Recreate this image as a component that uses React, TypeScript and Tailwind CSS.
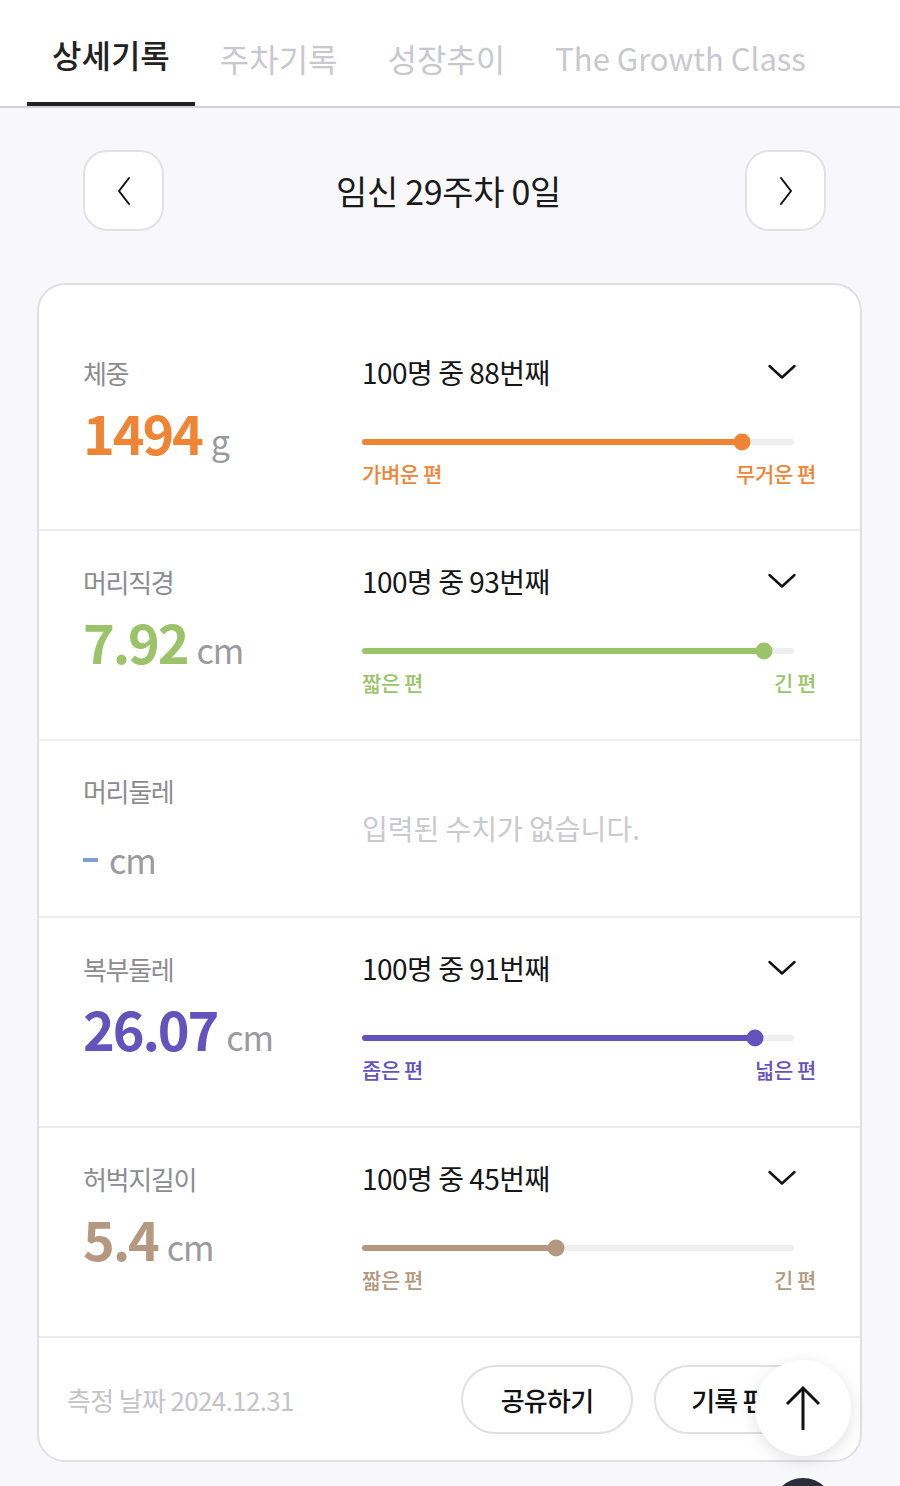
type Metric = {
    label: string;
    value?: string;
    unit: string;
    rank?: number;
    low?: string;
    high?: string;
    valueClass: string;
    fillClass: string;
    textClass: string;
};

const metrics: Metric[] = [
    { label: '체중', value: '1494', unit: 'g', rank: 88, low: '가벼운 편', high: '무거운 편', valueClass: 'text-[#ee8434]', fillClass: 'bg-[#ee8434]', textClass: 'text-[#ee8434]' },
    { label: '머리직경', value: '7.92', unit: 'cm', rank: 93, low: '짧은 편', high: '긴 편', valueClass: 'text-[#9bc46a]', fillClass: 'bg-[#9bc46a]', textClass: 'text-[#9bc46a]' },
    { label: '머리둘레', unit: 'cm', valueClass: '', fillClass: '', textClass: '' },
    { label: '복부둘레', value: '26.07', unit: 'cm', rank: 91, low: '좁은 편', high: '넓은 편', valueClass: 'text-[#6453bd]', fillClass: 'bg-[#6453bd]', textClass: 'text-[#6453bd]' },
    { label: '허벅지길이', value: '5.4', unit: 'cm', rank: 45, low: '짧은 편', high: '긴 편', valueClass: 'text-[#b49880]', fillClass: 'bg-[#b49880]', textClass: 'text-[#b49880]' },
];

const DownChevron = () => (
    <svg width="28" height="16" viewBox="0 0 28 16" fill="none">
        <polyline points="1.5,2 14,13.5 26.5,2" stroke="#111" strokeWidth="2.4" strokeLinecap="round" strokeLinejoin="round" />
    </svg>
);

const NavChevron = ({ dir }: { dir: 'left' | 'right' }) => (
    <svg width="14" height="30" viewBox="0 0 14 30" fill="none">
        <polyline
            points={dir === 'left' ? '12,2 2,15 12,28' : '2,2 12,15 2,28'}
            stroke="#111"
            strokeWidth="2"
            strokeLinecap="round"
            strokeLinejoin="round"
        />
    </svg>
);

const MetricRow = ({ m, first }: { m: Metric; first: boolean }) => {
    if (!m.value) {
        return (
            <div className="flex pl-[44px] pr-[44px] pt-[34px] pb-[35px] border-t-2 border-[#ececee]">
                <div className="w-[279px] shrink-0">
                    <div className="text-[26px] leading-[32px] tracking-[-0.05em] text-[#8c8c90]">{m.label}</div>
                    <div className="mt-[32px] flex items-center h-[42px]">
                        <span className="block w-[15px] h-[4px] bg-[#7e9fd3]" />
                        <span className="ml-[11px] text-[34px] leading-none text-[#9a9aa0] tracking-[-0.03em]">{m.unit}</span>
                    </div>
                </div>
                <div className="flex items-center">
                    <span className="text-[28px] text-[#c9c9ce]">입력된 수치가 없습니다.</span>
                </div>
            </div>
        );
    }
    return (
        <div className={`flex pl-[44px] pr-[44px] ${first ? 'pt-[36px] pb-[42px]' : 'pt-[35px] pb-[43px] border-t-2 border-[#ececee]'}`}>
            <div className="w-[279px] shrink-0">
                <div className="text-[26px] leading-[32px] tracking-[-0.05em] text-[#8c8c90]">{m.label}</div>
                <div className="mt-[16px] flex items-baseline">
                    <span className={`text-[54px] leading-[54px] font-bold tracking-[-0.04em] ${m.valueClass}`}>{m.value}</span>
                    <span className="ml-[9px] text-[34px] text-[#9a9aa0] tracking-[-0.03em]">{m.unit}</span>
                </div>
            </div>
            <div className="flex-1 -mt-[3px]">
                <div className="flex items-center justify-between pr-[20px]">
                    <span className="text-[28px] leading-[36px] tracking-[-0.018em] text-[#161616]">100명 중 {m.rank}번째</span>
                    <DownChevron />
                </div>
                <div className="mt-[49px] mr-[22px] relative h-[6px] rounded-full bg-[#eeeeee]">
                    <div className={`h-full rounded-full ${m.fillClass}`} style={{ width: `${m.rank}%` }} />
                    <div
                        className={`absolute top-1/2 w-[17px] h-[17px] -translate-x-1/2 -translate-y-1/2 rounded-full ${m.fillClass}`}
                        style={{ left: `${m.rank}%` }}
                    />
                </div>
                <div className={`mt-[14px] flex justify-between text-[21px] leading-[28px] font-medium tracking-[-0.02em] ${m.textClass}`}>
                    <span>{m.low}</span>
                    <span>{m.high}</span>
                </div>
            </div>
        </div>
    );
};

export default function App() {
    return (
        <div className="relative min-h-screen bg-[#f8f8fa] pb-[40px] font-['Noto_Sans_CJK_KR','Noto_Sans',sans-serif]">
            <div className="bg-white h-[108px] flex pl-[27px] border-b-2 border-[#d4d4d8]">
                <div className="h-full flex items-center px-[25px] pt-[6px] border-b-4 border-[#222] text-[32px] font-medium text-[#222]">상세기록</div>
                <div className="h-full flex items-center px-[25px] pt-[10px] text-[32px] text-[#c8c8ce]">주차기록</div>
                <div className="h-full flex items-center px-[25px] pt-[10px] text-[32px] text-[#c8c8ce]">성장추이</div>
                <div className="h-full flex items-center px-[25px] pt-[10px] text-[31px] text-[#c8c8ce]">The Growth Class</div>
            </div>

            <div className="mt-[42px] flex items-center justify-between pl-[83px] pr-[74px]">
                <button className="w-[81px] h-[81px] rounded-[24px] border-2 border-[#e2e2e4] bg-white flex items-center justify-center">
                    <NavChevron dir="left" />
                </button>
                <div className="text-[34px] tracking-[-0.01em] text-[#1a1a1a] pr-[12px]">임신 29주차 0일</div>
                <button className="w-[81px] h-[81px] rounded-[24px] border-2 border-[#e2e2e4] bg-white flex items-center justify-center">
                    <NavChevron dir="right" />
                </button>
            </div>

            <div className="mt-[52px] ml-[37px] w-[825px] bg-white border-2 border-[#e0e0e2] rounded-[28px] pt-[36px] overflow-hidden">
                {metrics.map((m, i) => (
                    <MetricRow key={m.label} m={m} first={i === 0} />
                ))}
                <div className="border-t-2 border-[#ececee] flex items-center justify-between pl-[28px] pr-[34px] h-[124px]">
                    <span className="text-[26px] tracking-[-0.025em] text-[#c4c4c8]">측정 날짜 2024.12.31</span>
                    <div className="flex gap-[21px]">
                        <button className="w-[172px] h-[69px] rounded-full border-2 border-[#e0e0e2] bg-white text-[26px] font-medium tracking-[-0.03em] text-[#111]">공유하기</button>
                        <button className="w-[172px] h-[69px] rounded-full border-2 border-[#e0e0e2] bg-white text-[26px] font-medium tracking-[-0.03em] text-[#111]">기록 편집</button>
                    </div>
                </div>
            </div>

            <button className="fixed right-[49px] bottom-[30px] w-[96px] h-[96px] rounded-full bg-white shadow-[0_4px_16px_rgba(0,0,0,0.12)] flex items-center justify-center">
                <svg width="40" height="48" viewBox="0 0 40 48" fill="none">
                    <line x1="20" y1="4" x2="20" y2="46" stroke="#111" strokeWidth="3" />
                    <polyline points="4,20 20,4 36,20" stroke="#111" strokeWidth="3" fill="none" />
                </svg>
            </button>
            <div className="fixed right-[66px] bottom-[-54px] w-[62px] h-[62px] rounded-full bg-[#2c2c38]" />
        </div>
    );
}
